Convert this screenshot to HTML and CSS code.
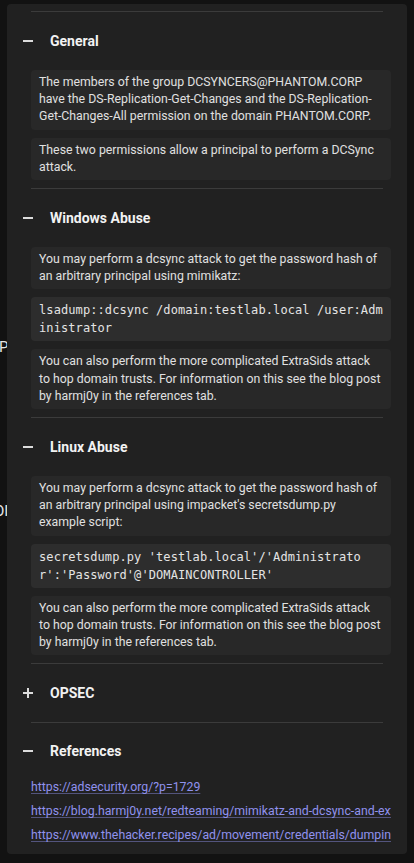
FILE: index.html
```html
<!DOCTYPE html>
<html lang="en">
<head>
<meta charset="utf-8">
<title>DCSync</title>
<link rel="stylesheet" href="styles.css">
</head>
<body>
<div class="behind">
  <span class="peek peek-p">P</span>
  <span class="peek peek-o">OI</span>
</div>
<div class="panel">
  <div class="divider"></div>
  <section class="section">
    <div class="head"><span class="toggle minus"></span><h2>General</h2></div>
    <div class="body">
      <p class="box">The members of the group DCSYNCERS@PHANTOM.CORP have the DS-Replication-Get-Changes and the DS-Replication-Get-Changes-All permission on the domain PHANTOM.CORP.</p>
      <p class="box">These two permissions allow a principal to perform a DCSync attack.</p>
    </div>
  </section>
  <div class="divider"></div>
  <section class="section">
    <div class="head"><span class="toggle minus"></span><h2>Windows Abuse</h2></div>
    <div class="body">
      <p class="box">You may perform a dcsync attack to get the password hash of an arbitrary principal using mimikatz:</p>
      <pre class="box code">lsadump::dcsync /domain:testlab.local /user:Administrator</pre>
      <p class="box">You can also perform the more complicated ExtraSids attack to hop domain trusts. For information on this see the blog post by harmj0y in the references tab.</p>
    </div>
  </section>
  <div class="divider"></div>
  <section class="section">
    <div class="head"><span class="toggle minus"></span><h2>Linux Abuse</h2></div>
    <div class="body">
      <p class="box">You may perform a dcsync attack to get the password hash of an arbitrary principal using impacket's secretsdump.py example script:</p>
      <pre class="box code">secretsdump.py 'testlab.local'/'Administrator':'Password'@'DOMAINCONTROLLER'</pre>
      <p class="box">You can also perform the more complicated ExtraSids attack to hop domain trusts. For information on this see the blog post by harmj0y in the references tab.</p>
    </div>
  </section>
  <div class="divider"></div>
  <section class="section">
    <div class="head"><span class="toggle plus"></span><h2>OPSEC</h2></div>
  </section>
  <div class="divider"></div>
  <section class="section">
    <div class="head head-refs"><span class="toggle minus"></span><h2>References</h2></div>
    <ul class="refs">
      <li><a href="#">https://adsecurity.org/?p=1729</a></li>
      <li><a href="#">https://blog.harmj0y.net/redteaming/mimikatz-and-dcsync-and-extrasids-oh-my/</a></li>
      <li><a href="#">https://www.thehacker.recipes/ad/movement/credentials/dumping/dcsync</a></li>
    </ul>
  </section>
</div>
</body>
</html>
```
FILE: styles.css
```css
* { box-sizing: border-box; }
html, body {
  margin: 0;
  padding: 0;
  background: #121212;
  font-family: Roboto, "Liberation Sans", sans-serif;
  color: #e2e2e2;
}
body {
  position: relative;
  height: 863px;
  overflow: hidden;
  padding-top: 4px;
}
.behind {
  position: absolute;
  left: 0;
  top: 0;
  width: 20px;
  height: 863px;
  z-index: 0;
}
.peek {
  position: absolute;
  font-size: 15px;
  color: #e6e6e6;
}
.peek-p { left: -1px; top: 338px; }
.peek-o { left: -6px; top: 502px; }
.panel {
  position: relative;
  z-index: 1;
  margin: 0 7px;
  background: #212121;
  border-radius: 4px;
  padding: 7px 16px 10px 16px;
}
.divider {
  height: 1px;
  background: #3b3b3b;
  margin: 0 8px;
}
.head {
  height: 58px;
  display: flex;
  align-items: center;
  gap: 17px;
}
.head-refs { height: 56px; }
.head h2 {
  margin: 0;
  font-size: 14px;
  font-weight: 700;
  color: #f2f2f2;
}
.toggle {
  position: relative;
  width: 10px;
  height: 10px;
  flex: none;
}
.toggle::before {
  content: "";
  position: absolute;
  left: 0;
  top: 4px;
  width: 10px;
  height: 2px;
  background: #dcdcdc;
}
.plus::after {
  content: "";
  position: absolute;
  left: 4px;
  top: 0;
  width: 2px;
  height: 10px;
  background: #dcdcdc;
}
.body {
  margin-left: 8px;
  padding-bottom: 8px;
  display: flex;
  flex-direction: column;
  gap: 8px;
}
.box {
  margin: 0;
  background: #282828;
  border-radius: 4px;
  padding: 4px 8px;
  font-size: 12.3px;
  line-height: 17.2px;
  color: #e0e0e0;
}
.code {
  background: #2d2d2d;
  padding-right: 6px;
  font-family: "DejaVu Sans Mono", "Liberation Mono", monospace;
  font-size: 12px;
  line-height: 18px;
  letter-spacing: 0.09px;
  white-space: pre-wrap;
  word-break: break-all;
  color: #e4e4e4;
}
.refs {
  list-style: none;
  margin: 0 0 0 8px;
  padding: 0;
  display: flex;
  flex-direction: column;
  gap: 7px;
}
.refs li {
  font-size: 12.3px;
  line-height: 17px;
  white-space: nowrap;
  overflow: hidden;
}
.refs a {
  color: #9092ee;
  text-decoration: underline;
  text-decoration-color: rgba(144, 146, 238, 0.45);
  text-underline-offset: 2px;
}
```
